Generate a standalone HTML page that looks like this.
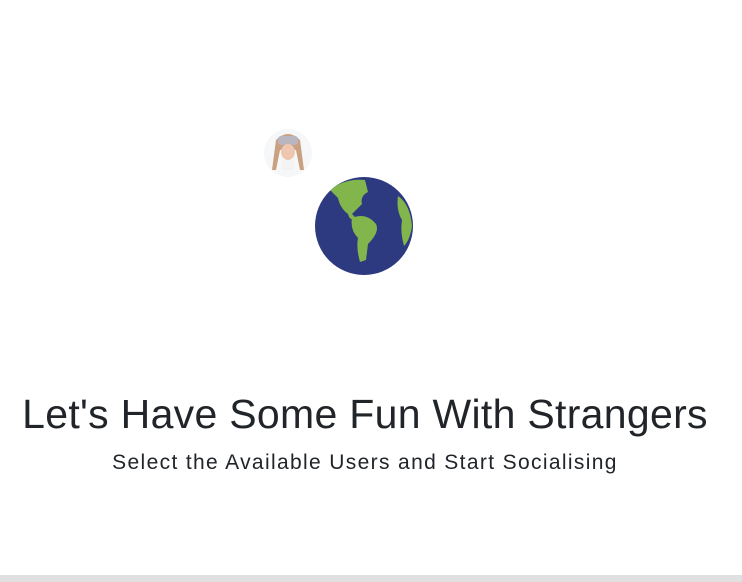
<!DOCTYPE html>
<html><head><style>
body{margin:0;width:742px;height:582px;background:#fff;position:relative;overflow:hidden;font-family:"Liberation Sans",sans-serif;color:#212529}
.t{position:absolute;left:0;width:730px;text-align:center;white-space:nowrap}
#h{top:391px;font-size:41px;letter-spacing:0.3px;line-height:47px}
#s{top:450px;font-size:21px;letter-spacing:1.35px;line-height:25px}
#bar{position:absolute;left:0;top:575px;width:742px;height:7px;background:#e0e0e0}
</style></head><body>
<svg style="position:absolute;left:0;top:0" width="742" height="300">
<circle cx="288" cy="153" r="24" fill="#f6f7f9"/>
<path d="M276 140 Q288 128 300 140 L304 170 L300 170 L296 150 L280 150 L276 170 L272 170 Z" fill="#c9a080"/>
<rect x="278" y="136" width="20" height="9" rx="3" fill="#b9b6c0"/>
<ellipse cx="288" cy="152" rx="7" ry="8" fill="#efc6b0"/>
<rect x="282" y="160" width="12" height="10" fill="#f3f3f3"/>
<circle cx="364" cy="226" r="49" fill="#2d3a80"/>
<clipPath id="c"><circle cx="364" cy="226" r="49"/></clipPath>
<g clip-path="url(#c)" fill="#82b54b">
<path d="M330 190 Q345 178 365 180 L368 192 Q360 196 362 204 Q356 210 352 214 L356 218 Q350 222 348 214 Q340 208 338 198 Z"/>
<path d="M352 218 Q366 212 376 224 Q380 232 368 244 L366 260 L360 262 Q356 248 358 238 Q350 230 352 218 Z"/>
<path d="M398 196 Q410 204 412 226 Q410 240 404 246 Q400 232 402 220 Q396 210 398 196 Z"/>
</g>
</svg>
<div class="t" id="h">Let's Have Some Fun With Strangers</div>
<div class="t" id="s">Select the Available Users and Start Socialising</div>
<div id="bar"></div>
</body></html>
